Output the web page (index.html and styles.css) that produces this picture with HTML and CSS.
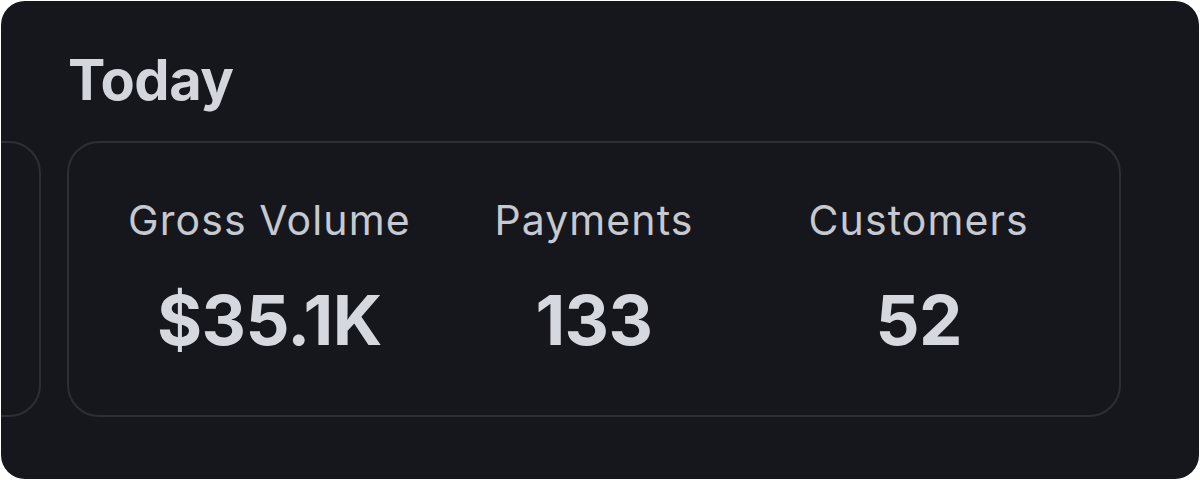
FILE: index.html
```html
<!DOCTYPE html>
<html lang="en">
<head>
<meta charset="utf-8">
<title>Today</title>
<link rel="stylesheet" href="styles.css">
</head>
<body>
<div class="panel">
  <h1 class="title">Today</h1>
  <div class="track">
    <div class="card card-prev"></div>
    <div class="card card-main">
      <div class="stat">
        <div class="label">Gross Volume</div>
        <div class="value">$35.1K</div>
      </div>
      <div class="stat">
        <div class="label">Payments</div>
        <div class="value">133</div>
      </div>
      <div class="stat">
        <div class="label">Customers</div>
        <div class="value">52</div>
      </div>
    </div>
  </div>
</div>
</body>
</html>
```
FILE: styles.css
```css
html, body {
  margin: 0;
  padding: 0;
  background: #ffffff;
}
body {
  font-family: Inter, "Noto Sans", "Liberation Sans", sans-serif;
}
.panel {
  margin: 1px;
  width: 1198px;
  height: 478px;
  box-sizing: border-box;
  border-radius: 24px;
  background: #15171c;
  padding: 47px 0 0 66px;
  overflow: hidden;
}
.title {
  margin: 0 0 0 1px;
  font-size: 56px;
  line-height: 64px;
  font-weight: 700;
  color: #d4d6dd;
  letter-spacing: -0.5px;
}
.track {
  margin-top: 29px;
  display: flex;
  gap: 26px;
  margin-left: -326px;
}
.card {
  flex: none;
  box-sizing: border-box;
  border: 2px solid #2c2f36;
  border-radius: 32px;
  height: 276px;
}
.card-prev {
  width: 300px;
}
.card-main {
  width: 1054px;
  padding: 52px 38px 0;
  display: grid;
  grid-template-columns: repeat(3, 1fr);
}
.stat {
  display: flex;
  flex-direction: column;
  align-items: center;
}
.label {
  font-size: 41px;
  line-height: 50px;
  color: #c6c9d0;
  font-weight: 400;
  letter-spacing: 1.1px;
}
.value {
  margin-top: 35px;
  font-size: 69px;
  line-height: 80px;
  font-weight: 700;
  color: #d6d8df;
  letter-spacing: -0.6px;
}
```
